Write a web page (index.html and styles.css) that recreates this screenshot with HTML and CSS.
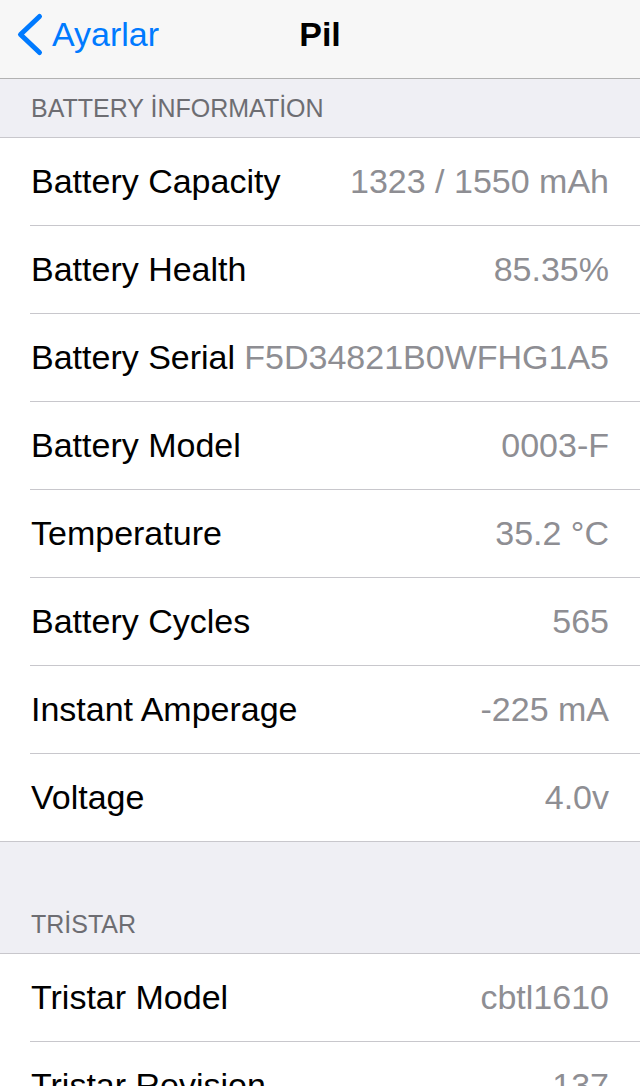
FILE: index.html
```html
<!DOCTYPE html>
<html lang="tr">
<head>
  <meta charset="UTF-8">
  <meta name="viewport" content="width=device-width, initial-scale=1">
  <title>Pil</title>
  <link rel="stylesheet" href="styles.css">
</head>

<body>

  <header class="nav">
    <a class="back" href="#">
      <svg class="chevron" width="28" height="45" viewBox="0 0 28 45">
        <polyline points="23.5,4.5 4.5,22.5 23.5,40.5" fill="none" stroke="#007aff" stroke-width="5" stroke-linecap="round" stroke-linejoin="round"/>
      </svg>
      <span>Ayarlar</span>
    </a>
    <h1 class="title">Pil</h1>
    <div></div>
  </header>

  <main>
    <div class="section-header">BATTERY İNFORMATİON</div>
    <ul class="group">
      <li class="row"><div class="row-inner"><span class="label">Battery Capacity</span><span class="value">1323 / 1550 mAh</span></div></li>
      <li class="row"><div class="row-inner"><span class="label">Battery Health</span><span class="value">85.35%</span></div></li>
      <li class="row"><div class="row-inner"><span class="label">Battery Serial</span><span class="value">F5D34821B0WFHG1A5</span></div></li>
      <li class="row"><div class="row-inner"><span class="label">Battery Model</span><span class="value">0003-F</span></div></li>
      <li class="row"><div class="row-inner"><span class="label">Temperature</span><span class="value">35.2 °C</span></div></li>
      <li class="row"><div class="row-inner"><span class="label">Battery Cycles</span><span class="value">565</span></div></li>
      <li class="row"><div class="row-inner"><span class="label">Instant Amperage</span><span class="value">-225 mA</span></div></li>
      <li class="row"><div class="row-inner"><span class="label">Voltage</span><span class="value">4.0v</span></div></li>
    </ul>

    <div class="section-header tall">TRİSTAR</div>
    <ul class="group">
      <li class="row"><div class="row-inner"><span class="label">Tristar Model</span><span class="value">cbtl1610</span></div></li>
      <li class="row"><div class="row-inner"><span class="label">Tristar Revision</span><span class="value">137</span></div></li>
    </ul>
  </main>

</body>
</html>
```

FILE: styles.css
```css
* { margin: 0; padding: 0; box-sizing: border-box; }
body { font-family: "Liberation Sans", Arial, sans-serif; background: #efeff4; color: #000; }

.nav { height: 79px; background: #f7f7f7; border-bottom: 1px solid #b2b2b2; display: grid; grid-template-columns: 1fr auto 1fr; align-items: center; padding-bottom: 10px; }
.back { display: flex; align-items: center; gap: 8px; padding-left: 16px; color: #007aff; text-decoration: none; font-size: 34px; }
.chevron { display: block; }
.title { font-size: 34px; font-weight: bold; }

.section-header { height: 59px; display: flex; align-items: flex-end; padding: 0 0 13px 31px; font-size: 25px; line-height: 31px; color: #6d6d72; border-bottom: 1px solid #c8c7cc; }
.section-header.tall { height: 112px; }

.group { list-style: none; background: #fff; border-bottom: 1px solid #c8c7cc; }
.row { padding-left: 30px; }
.row-inner { height: 88px; display: flex; justify-content: space-between; align-items: center; padding-right: 31px; border-bottom: 1px solid #c8c7cc; font-size: 34px; }
.row:last-child .row-inner { height: 87px; border-bottom: none; }
.label { padding-left: 1px; }
.value { color: #8e8e93; }
```
